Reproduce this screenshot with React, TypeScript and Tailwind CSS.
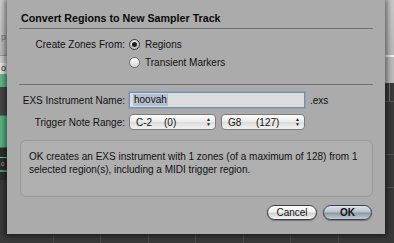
import React from 'react';

const FONT = "font-['Liberation_Sans','Arial',sans-serif]";

function LeftStrip() {
  return (
    <div className="w-[7px] flex flex-col shrink-0 overflow-hidden">
      <div className="h-[55px] bg-[linear-gradient(#d0d0d0,#bcbcbc)] text-[9px] leading-none text-[#7a7a7a] pt-[33px] pl-[1px]">p</div>
      <div className="h-[8px] bg-[#cfcfcf] border-t border-[#9a9a9a]" />
      <div className="h-[11px] bg-[#e6e6e6] text-[9px] leading-[11px] text-[#222] pl-[1px]">o</div>
      <div className="h-[13px] bg-[#63b98a]" />
      <div className="h-[28px] bg-[#484848]" />
      <div className="h-[33px] bg-[#5cb585] border-y border-[#3f7f5c]" />
      <div className="h-[32px] bg-[#2f2f2f] flex flex-col justify-center gap-[3px]">
        <div className="h-[1px] bg-[#6fc596]" />
        <div className="text-[6px] leading-none text-[#bbb] pl-[1px]">0</div>
        <div className="h-[2px] bg-[#4f9d71]" />
      </div>
      <div className="flex-1 bg-[#3b3b3b]" />
    </div>
  );
}

function RightStrip() {
  return (
    <div className="w-[9px] flex flex-col shrink-0">
      <div className="h-[55px] bg-[linear-gradient(#cacaca,#bababa)]" />
      <div className="h-[2px] bg-[#f2f2f2]" />
      <div className="h-[26px] bg-[#bcbcbc]" />
      <div className="h-[19px] bg-[#3a3a3a] border-b border-[#555] flex">
        <div className="w-[4px]" />
        <div className="w-[1px] bg-[#777]" />
      </div>
      <div className="h-[53px] bg-[#3a3a3a] border-b border-[#525252]" />
      <div className="h-[33px] bg-[#3a3a3a] border-b border-[#525252]" />
      <div className="flex-1 bg-[#393939]" />
    </div>
  );
}

function BottomStrip() {
  return (
    <div className="flex-1 bg-[#3a3a3a] flex">
      <div className="w-[46px]" />
      {[0, 1, 2, 3, 4, 5, 6].map((i) => (
        <div key={i} className="w-[48px] border-l border-[#4c4c4c]" />
      ))}
    </div>
  );
}

function Radio({ checked }: { checked?: boolean }) {
  return (
    <div
      className={`w-[11px] h-[11px] rounded-full border flex items-center justify-center ${
        checked
          ? 'border-[#3a3a3a] bg-[radial-gradient(circle_at_50%_35%,#f4f4f4,#a9a9a9)]'
          : 'border-[#6a6a6a] bg-[linear-gradient(#ffffff,#d6d6d6)]'
      }`}
    >
      {checked && <div className="w-[5px] h-[5px] rounded-full bg-[#1e1e1e]" />}
    </div>
  );
}

function Select({ note, value, width }: { note: string; value: string; width: string }) {
  return (
    <div
      className={`${width} h-[16px] rounded-[4px] border border-[#7c7c7c] bg-[linear-gradient(#ffffff,#e9e9e9_50%,#dcdcdc_51%,#f2f2f2)] flex items-center pl-[6px] pr-[4px] text-[10px] text-[#111]`}
    >
      <span className="w-[28px]">{note}</span>
      <span className="flex-1">{value}</span>
      <span className="flex flex-col items-center leading-none text-[5px] text-[#222]">
        <span>▲</span>
        <span>▼</span>
      </span>
    </div>
  );
}

function Dialog() {
  return (
    <div className="relative z-10 h-[234px] bg-[#ababab] shadow-[0_0_6px_2px_rgba(0,0,0,0.55)] px-[12px] text-[#111]">
      <div className="h-[28px] pl-[2px] pt-[11px] text-[10.7px] leading-[14px] font-bold text-[#0a0a0a]">
        Convert Regions to New Sampler Track
      </div>
      <div className="h-[1px] bg-[#707070]" />
      <div className="pt-[6px] pb-[13px] grid grid-cols-[106px_1fr] gap-x-[4px] text-[10px]">
        <div className="h-[18px] flex items-center justify-end">Create Zones From:</div>
        <div className="h-[18px] flex items-center gap-[5px]">
          <Radio checked />
          <span>Regions</span>
        </div>
        <div className="h-[18px]" />
        <div className="h-[18px] flex items-center gap-[5px]">
          <Radio />
          <span>Transient Markers</span>
        </div>
      </div>
      <div className="h-[1px] bg-[#707070]" />
      <div className="pt-[7px] grid grid-cols-[106px_1fr] gap-x-[4px] gap-y-[6px] text-[10px]">
        <div className="h-[16px] flex items-center justify-end">EXS Instrument Name:</div>
        <div className="h-[16px] flex items-center gap-[5px]">
          <div className="w-[176px] h-[16px] bg-[#dcdcdc] border border-[#6f8fb5] shadow-[0_0_0_1px_rgba(110,150,200,0.45)] flex items-center pl-[3px]">
            <span className="bg-[#b4c0d0] px-[1px] leading-[12px]">hoovah</span>
          </div>
          <span>.exs</span>
        </div>
        <div className="h-[16px] flex items-center justify-end">Trigger Note Range:</div>
        <div className="h-[16px] flex items-center gap-[5px]">
          <Select note="C-2" value="(0)" width="w-[87px]" />
          <Select note="G8" value="(127)" width="w-[84px]" />
        </div>
      </div>
      <div className="mt-[10px] ml-[1px] h-[57px] rounded-[6px] border border-[#989898] bg-[#afafaf] pl-[8px] pt-[9px] text-[10px] leading-[13px]">
        OK creates an EXS instrument with 1 zones (of a maximum of 128) from 1
        <br />
        selected region(s), including a MIDI trigger region.
      </div>
      <div className="mt-[8px] flex justify-end gap-[6px] pr-[1px]">
        <div className="w-[50px] h-[15px] rounded-full border border-[#3c3c3c] bg-[linear-gradient(#ffffff,#f0f0f0_45%,#d2d2d2_55%,#f4f4f4)] flex items-center justify-center text-[10px] text-[#111] shadow-[0_1px_1px_rgba(0,0,0,0.3)]">
          Cancel
        </div>
        <div className="w-[49px] h-[15px] rounded-full border border-[#3a3f47] bg-[linear-gradient(#dfe4ea,#b8c1cc_45%,#8e99a6_55%,#c3ccd6)] flex items-center justify-center text-[10px] font-bold text-[#111] shadow-[0_1px_1px_rgba(0,0,0,0.3)]">
          OK
        </div>
      </div>
    </div>
  );
}

export default function App() {
  return (
    <div className={`w-[394px] h-[243px] flex overflow-hidden bg-[#3a3a3a] ${FONT}`}>
      <LeftStrip />
      <div className="w-[378px] flex flex-col shrink-0">
        <Dialog />
        <BottomStrip />
      </div>
      <RightStrip />
    </div>
  );
}
